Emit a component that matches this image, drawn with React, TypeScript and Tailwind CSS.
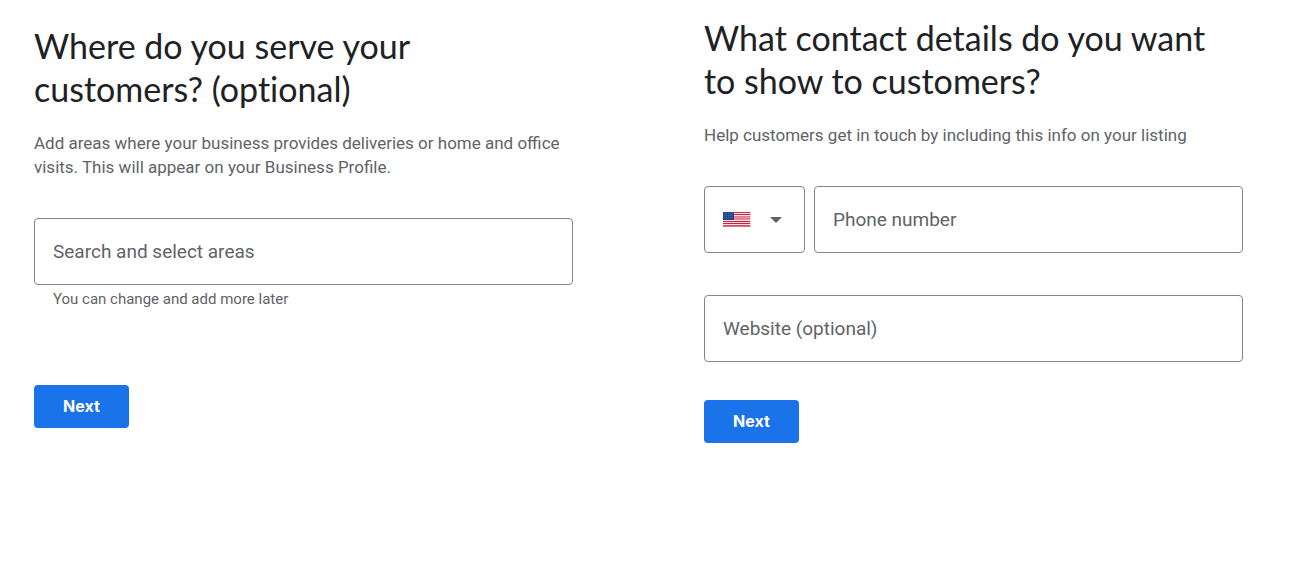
import type { ReactNode } from "react";

function Heading({ children }: { children: ReactNode }) {
  return (
    <h1 className="font-['Lato','Open_Sans',sans-serif] text-[34px] leading-[43px] text-[#202124] [font-variant-ligatures:none]">
      {children}
    </h1>
  );
}

function NextButton() {
  return (
    <button
      type="submit"
      className="h-[43px] w-[95px] rounded bg-[#1a73e8] pb-0.5 font-['Inter',sans-serif] text-base font-bold text-white"
    >
      Next
    </button>
  );
}

const fieldClass =
  "block h-[67px] w-full rounded border border-[#80868b] bg-white px-[18px] text-[19px] text-[#202124] placeholder:text-[#5f6368] placeholder:opacity-100";

function FlagIcon() {
  return (
    <svg width="28" height="15" viewBox="0 0 28 15" aria-hidden="true" shapeRendering="crispEdges">
      <rect width="28" height="15" fill="#f9dfe3" />
      <rect width="28" height="1" fill="#cf2b49" />
      <rect y="2" width="28" height="1" fill="#c8203f" />
      <rect y="4" width="28" height="1" fill="#e07f92" />
      <rect y="5" width="28" height="1" fill="#e58f9f" />
      <rect y="6" width="28" height="1" fill="#e07f92" />
      <rect y="7" width="28" height="1" fill="#e58f9f" />
      <rect y="9" width="28" height="1" fill="#c8203f" />
      <rect y="11" width="28" height="1" fill="#c8203f" />
      <rect y="13" width="28" height="1" fill="#d54c65" />
      <rect y="14" width="28" height="1" fill="#dc7185" />
      <rect width="11" height="8" fill="#234684" />
      {[1, 3, 5].map((y) =>
        [1, 3, 5, 7, 9].map((x) => (
          <rect key={`${x}-${y}`} x={x} y={y} width="1" height="1" fill="#4c6da0" />
        )),
      )}
      <rect x="27" width="1" height="15" fill="#ffffff" opacity="0.6" />
    </svg>
  );
}

export default function App() {
  return (
    <main className="grid grid-cols-2 gap-[131px] bg-white pr-[46px] pl-[34px] font-['Roboto',sans-serif] text-[#5f6368]">
      <form className="pt-6" onSubmit={(e) => e.preventDefault()}>
        <Heading>
          Where do you serve your
          <br />
          customers? (optional)
        </Heading>
        <p className="mt-[21px] text-[17px] leading-6">
          Add areas where your business provides deliveries or home and office visits. This will
          appear on your Business Profile.
        </p>
        <input
          type="text"
          aria-label="Search and select areas"
          aria-describedby="areas-hint"
          placeholder="Search and select areas"
          className={`${fieldClass} mt-[39px]`}
        />
        <p id="areas-hint" className="mt-1 mb-[76px] px-[19px] text-[15px] leading-5">
          You can change and add more later
        </p>
        <NextButton />
      </form>

      <form className="pt-4" onSubmit={(e) => e.preventDefault()}>
        <Heading>
          What contact details do you want
          <br />
          to show to customers?
        </Heading>
        <p className="mt-[21px] text-[17px] leading-6">
          Help customers get in touch by including this info on your listing
        </p>
        <div className="mt-[39px] flex gap-[9px]">
          <div className="relative w-[101px] shrink-0">
            <select
              aria-label="Country"
              defaultValue="US"
              className="block h-[67px] w-full appearance-none rounded border border-[#80868b] bg-white px-[18px] text-transparent"
            >
              <option value="US" aria-label="United States" />
            </select>
            <span className="pointer-events-none absolute inset-0 flex items-center justify-between pr-[23px] pl-[19px]">
              <FlagIcon />
              <svg width="12" height="6" viewBox="0 0 12 6" aria-hidden="true">
                <path d="M0 0h12L6 6z" fill="#5f6368" />
              </svg>
            </span>
          </div>
          <input
            type="tel"
            aria-label="Phone number"
            placeholder="Phone number"
            className={fieldClass}
          />
        </div>
        <input
          type="url"
          aria-label="Website (optional)"
          placeholder="Website (optional)"
          className={`${fieldClass} mt-[42px] mb-[38px]`}
        />
        <NextButton />
      </form>
    </main>
  );
}
